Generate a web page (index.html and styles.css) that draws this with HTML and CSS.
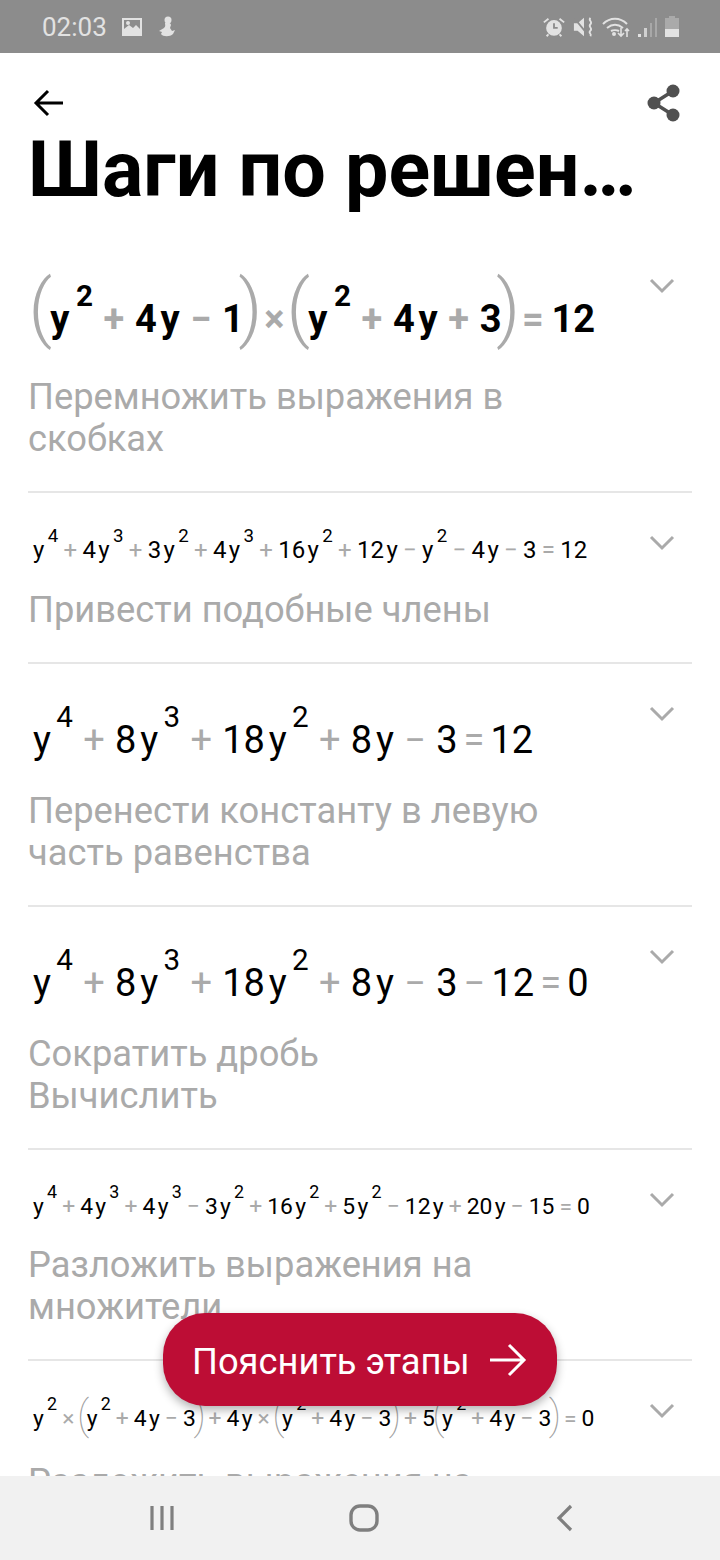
FILE: index.html
```html
<!DOCTYPE html>
<html lang="ru">
<head>
    <meta charset="UTF-8">
    <meta name="viewport" content="width=device-width, initial-scale=1.0">
    <title>Шаги по решению</title>
    <link rel="stylesheet" href="styles.css">
</head>
<body>
    <div class="status-bar">
        <div class="status-left">
            <span class="status-time">02:03</span>
            <svg class="icon" width="22" height="20" viewBox="0 0 22 20"><path fill="#e2e2e2" fill-rule="evenodd" d="M1 1h20v18H1zM3 3v9l5-4 4 3 3-3 4 4V3z"/><circle cx="7" cy="6" r="2" fill="#e2e2e2"/></svg>
            <svg class="icon" width="20" height="22" viewBox="0 0 20 22"><circle cx="11" cy="4" r="3.5" fill="#e2e2e2"/><path fill="#e2e2e2" d="M8 7c0 2 1 3-1 5l-5 3 3 1-1 2c2 3 9 3 12 0l2-4-3 1-2-3 1-3c0-2-3-3-6-2z"/></svg>
        </div>
        <div class="status-right">
            <svg class="icon" width="24" height="22" viewBox="0 0 26 22"><circle cx="13" cy="12" r="8.5" fill="#e2e2e2"/><path d="M13 7v5h4" fill="none" stroke="#8c8c8c" stroke-width="2"/><path d="M2 6l5-4M24 6l-5-4M7 19l-2 2M19 19l2 2" stroke="#e2e2e2" stroke-width="2"/></svg>
            <svg class="icon" width="22" height="22" viewBox="0 0 24 22"><path fill="#e2e2e2" d="M1 7h4l7-6v20L5 15H1z"/><path d="M2 2l13 16" stroke="#8c8c8c" stroke-width="2"/><path d="M19 1c-3 3 3 4 0 7s3 4 0 7 2 3 0 6" fill="none" stroke="#e2e2e2" stroke-width="2"/></svg>
            <svg class="icon" width="28" height="22" viewBox="0 0 28 22"><path d="M1 8c7-7 17-7 24 0M5 12c5-4 11-4 16 0M9 15c2-1 6-1 8 0" fill="none" stroke="#e2e2e2" stroke-width="2"/><circle cx="12" cy="18" r="2" fill="#e2e2e2"/><path d="M19 12v8M16 17l3 3 3-3" fill="none" stroke="#e2e2e2" stroke-width="1.6"/><path d="M25 21v-8M23 15l2-2 2 2" fill="none" stroke="#e2e2e2" stroke-width="1.6"/></svg>
            <svg class="icon" width="20" height="22" viewBox="0 0 20 22"><rect x="1" y="18" width="3" height="3" fill="#e2e2e2"/><rect x="7" y="12" width="3" height="9" fill="#d0d0d0"/><rect x="13" y="7" width="2" height="14" fill="#a8a8a8"/><rect x="18" y="2" width="2" height="19" fill="#a8a8a8"/></svg>
            <svg class="icon" width="16" height="22" viewBox="0 0 16 22"><path fill="#aaaaaa" d="M5 0h6v2h4v12H1V2h4z"/><rect x="1" y="13" width="14" height="8" fill="#e2e2e2"/></svg>
        </div>
    </div>

    <main class="content">
        <div class="toolbar">
            <svg class="back" width="32" height="28" viewBox="0 0 32 28"><path d="M30 14H4M15 2L3 14l12 12" fill="none" stroke="#000" stroke-width="3"/></svg>
            <svg width="34" height="38" viewBox="0 0 34 38"><path d="M26 7L7 19l19 12" fill="none" stroke="#505050" stroke-width="3.5"/><circle cx="26" cy="7" r="6.5" fill="#505050"/><circle cx="7" cy="19" r="6.5" fill="#505050"/><circle cx="26" cy="31" r="6.5" fill="#505050"/></svg>
        </div>
        <h1 class="title">Шаги по решению</h1>

        <section class="step">
            <div class="step-head">
                <div class="math math-tall"><span class="p p-big">(</span><span class="b v">y</span><span class="b s">2</span><span class="o">+</span><span class="b">4</span><span class="b v">y</span><span class="o">−</span><span class="b">1</span><span class="p p-big">)</span><span class="o o-x">×</span><span class="p p-big">(</span><span class="b v">y</span><span class="b s">2</span><span class="o">+</span><span class="b">4</span><span class="b v">y</span><span class="o">+</span><span class="b">3</span><span class="p p-big">)</span><span class="o o-x">=</span><span class="b">12</span></div>
                <svg class="chevron" width="26" height="16" viewBox="0 0 26 16"><path d="M2 2l11 11L24 2" fill="none" stroke="#aaa" stroke-width="3"/></svg>
            </div>
            <p class="step-text">Перемножить выражения в<br>скобках</p>
        </section>

        <section class="step">
            <div class="step-head">
                <div class="math math-small">y<span class="s">4</span><span class="o">+</span>4<span class="v">y</span><span class="s">3</span><span class="o">+</span>3<span class="v">y</span><span class="s">2</span><span class="o">+</span>4<span class="v">y</span><span class="s">3</span><span class="o">+</span>16<span class="v">y</span><span class="s">2</span><span class="o">+</span>12<span class="v">y</span><span class="o">−</span>y<span class="s">2</span><span class="o">−</span>4<span class="v">y</span><span class="o">−</span>3<span class="o">=</span>12</div>
                <svg class="chevron" width="26" height="16" viewBox="0 0 26 16"><path d="M2 2l11 11L24 2" fill="none" stroke="#aaa" stroke-width="3"/></svg>
            </div>
            <p class="step-text">Привести подобные члены</p>
        </section>

        <section class="step">
            <div class="step-head">
                <div class="math math-large">y<span class="s">4</span><span class="o">+</span>8<span class="v">y</span><span class="s">3</span><span class="o">+</span>18<span class="v">y</span><span class="s">2</span><span class="o">+</span>8<span class="v">y</span><span class="o">−</span>3<span class="o t">=</span>12</div>
                <svg class="chevron" width="26" height="16" viewBox="0 0 26 16"><path d="M2 2l11 11L24 2" fill="none" stroke="#aaa" stroke-width="3"/></svg>
            </div>
            <p class="step-text">Перенести константу в левую<br>часть равенства</p>
        </section>

        <section class="step">
            <div class="step-head">
                <div class="math math-large">y<span class="s">4</span><span class="o">+</span>8<span class="v">y</span><span class="s">3</span><span class="o">+</span>18<span class="v">y</span><span class="s">2</span><span class="o">+</span>8<span class="v">y</span><span class="o">−</span>3<span class="o t">−</span>12<span class="o t">=</span>0</div>
                <svg class="chevron" width="26" height="16" viewBox="0 0 26 16"><path d="M2 2l11 11L24 2" fill="none" stroke="#aaa" stroke-width="3"/></svg>
            </div>
            <p class="step-text">Сократить дробь<br>Вычислить</p>
        </section>

        <section class="step">
            <div class="step-head">
                <div class="math math-small math-long">y<span class="s">4</span><span class="o">+</span>4<span class="v">y</span><span class="s">3</span><span class="o">+</span>4<span class="v">y</span><span class="s">3</span><span class="o">−</span>3<span class="v">y</span><span class="s">2</span><span class="o">+</span>16<span class="v">y</span><span class="s">2</span><span class="o">+</span>5<span class="v">y</span><span class="s">2</span><span class="o">−</span>12<span class="v">y</span><span class="o">+</span>20<span class="v">y</span><span class="o">−</span>15<span class="o">=</span>0</div>
                <svg class="chevron" width="26" height="16" viewBox="0 0 26 16"><path d="M2 2l11 11L24 2" fill="none" stroke="#aaa" stroke-width="3"/></svg>
            </div>
            <p class="step-text">Разложить выражения на<br>множители</p>
        </section>

        <section class="step">
            <div class="step-head">
                <div class="math math-small math-parens">y<span class="s">2</span><span class="o">×</span><span class="p">(</span>y<span class="s">2</span><span class="o">+</span>4<span class="v">y</span><span class="o">−</span>3<span class="p">)</span><span class="o">+</span>4<span class="v">y</span><span class="o">×</span><span class="p">(</span>y<span class="s">2</span><span class="o">+</span>4<span class="v">y</span><span class="o">−</span>3<span class="p">)</span><span class="o">+</span>5<span class="p">(</span>y<span class="s">2</span><span class="o">+</span>4<span class="v">y</span><span class="o">−</span>3<span class="p">)</span><span class="o">=</span>0</div>
                <svg class="chevron" width="26" height="16" viewBox="0 0 26 16"><path d="M2 2l11 11L24 2" fill="none" stroke="#aaa" stroke-width="3"/></svg>
            </div>
            <p class="step-text">Разложить выражения на множители</p>
        </section>

        <button class="explain" type="button">
            <span class="explain-label">Пояснить этапы</span>
            <svg width="38" height="34" viewBox="0 0 38 34"><path d="M1 17h34M20 2l15 15-15 15" fill="none" stroke="#fff" stroke-width="3"/></svg>
        </button>
    </main>

    <nav class="nav-bar">
        <svg width="28" height="28" viewBox="0 0 28 28"><path d="M4 2v24M14 2v24M24 2v24" fill="none" stroke="#7f7f7f" stroke-width="3.2"/></svg>
        <svg width="30" height="28" viewBox="0 0 30 28"><rect x="2" y="2" width="26" height="24" rx="9" fill="none" stroke="#7f7f7f" stroke-width="3.4"/></svg>
        <svg width="22" height="28" viewBox="0 0 22 28"><path d="M19 2L7 14l12 12" fill="none" stroke="#7f7f7f" stroke-width="3.2"/></svg>
    </nav>
</body>
</html>
```

FILE: styles.css
```css
* {
    box-sizing: border-box;
}
body {
    margin: 0;
    width: 720px;
    height: 1560px;
    overflow: hidden;
    font-family: Roboto, sans-serif;
    background-color: #fff;
    display: flex;
    flex-direction: column;
}
.status-bar {
    height: 53px;
    flex: none;
    padding: 0 40px 0 42px;
    display: flex;
    justify-content: space-between;
    align-items: center;
    background-color: #8c8c8c;
}
.status-left, .status-right {
    display: flex;
    align-items: center;
}
.status-left {
    gap: 14px;
}
.status-right {
    gap: 7px;
}
.status-time {
    font-size: 26px;
    color: #e2e2e2;
}
.icon {
    display: block;
}
.content {
    position: relative;
    flex: 1;
    min-height: 0;
    overflow: hidden;
    padding: 0 28px;
}
.toolbar {
    height: 80px;
    padding: 31px 11px 0 5px;
    display: flex;
    justify-content: space-between;
    align-items: flex-start;
}
.back {
    margin-top: 5px;
}
.title {
    margin: -3px 28px 0 0;
    height: 106px;
    font-size: 77.2px;
    line-height: 80px;
    font-weight: 700;
    color: #000;
    white-space: nowrap;
    overflow: hidden;
    text-overflow: ellipsis;
}
.step {
    padding: 32px 17px 31px 0;
    border-bottom: 2px solid #e6e6e6;
}
.step-head {
    display: flex;
    justify-content: space-between;
    align-items: flex-start;
    margin-bottom: 6px;
}
.chevron {
    flex: none;
    margin-top: 10px;
}
.math {
    padding-left: 5px;
    white-space: nowrap;
    color: #000;
}
.math-tall {
    height: 102px;
    padding-left: 6px;
    font-size: 38px;
    line-height: 102px;
}
.math-large {
    height: 88px;
    font-size: 38px;
    line-height: 88px;
}
.math-small {
    height: 58px;
    font-size: 24px;
    line-height: 50px;
}
.math-long {
    height: 56px;
    font-size: 22.9px;
}
.math-parens {
    height: 62px;
    font-size: 22.9px;
    line-height: 52px;
}
.b {
    font-weight: 700;
}
.v {
    margin-left: .1em;
}
.s {
    font-size: .78em;
    line-height: 0;
    vertical-align: .87em;
    margin-left: .18em;
}
.o {
    margin: 0 .27em;
    color: #aaa;
}
.o.t {
    margin: 0 .16em;
}
.math-small .o {
    margin: 0 .22em;
}
.math-tall .o {
    margin: 0 .28em;
    font-weight: 700;
}
.math-tall .s {
    margin-left: .22em;
}
.math-tall .o-x {
    margin: 0 .2em;
}
.p {
    margin: 0 -.06em;
    font-size: 1.8em;
    font-weight: 100;
    line-height: 0;
    color: #a0a0a0;
    vertical-align: -.08em;
}
.p-big {
    margin: 0 -5.6px;
    font-size: 74px;
    font-weight: 300;
    color: #aaa;
    vertical-align: -1px;
}
.step-text {
    margin: 0;
    font-size: 36.3px;
    line-height: 42px;
    color: #aaa;
}
.explain {
    position: absolute;
    left: 163px;
    top: 1260px;
    width: 394px;
    height: 93px;
    padding: 0 30px 0 29px;
    display: flex;
    justify-content: space-between;
    align-items: center;
    border: none;
    border-radius: 42px;
    font-family: Roboto, sans-serif;
    font-size: 36.3px;
    color: #fff;
    background-color: #bd0d35;
    box-shadow: 0 4px 10px rgba(0, 0, 0, .3);
}
.explain-label {
    padding-top: 4px;
}
.nav-bar {
    height: 84px;
    flex: none;
    padding: 0 146px 0 148px;
    display: flex;
    justify-content: space-between;
    align-items: center;
    background-color: #f1f1f1;
}
```
